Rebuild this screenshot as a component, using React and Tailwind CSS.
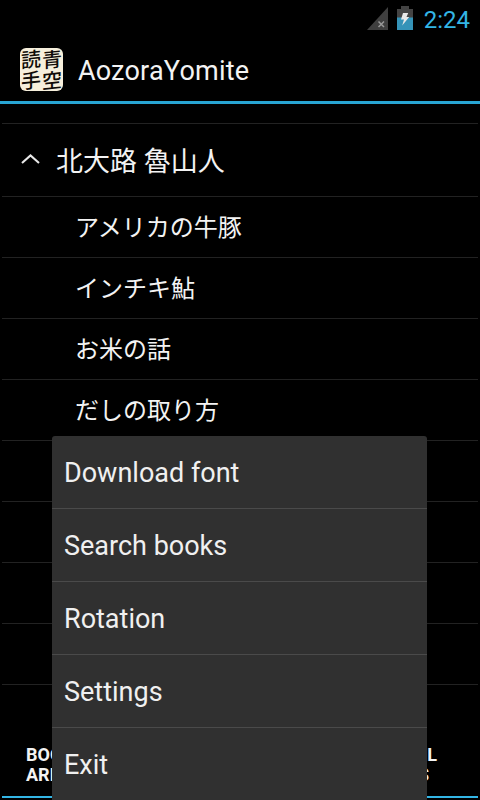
const stories = ["アメリカの牛豚", "インチキ鮎", "お米の話", "だしの取り方", "", "", "", ""];

const menuItems = ["Download font", "Search books", "Rotation", "Settings", "Exit"];

function StatusBar() {
  return (
    <div className="flex h-[38px] shrink-0 items-start justify-end pr-[10px]">
      <svg className="mt-[7px] mr-[9px]" width="21" height="23" viewBox="0 0 21 23">
        <path d="M0 23L21 0V23Z" fill="#3f3f3f" />
        <path d="M11.5 14.5L17 20M17 14.5L11.5 20" stroke="#999" strokeWidth="1.5" />
      </svg>
      <svg className="mt-[6px] mr-[11px]" width="16" height="24" viewBox="0 0 16 24">
        <path d="M4 0H12V3H16V12H0V3H4Z" fill="#444" />
        <path d="M0 11.5H16V24H0Z" fill="#3593b8" />
        <path d="M6 7H11.2L9.5 11H12.2L5.2 19.5L7 13.5H4Z" fill="#e8e8e8" />
      </svg>
      <span className="mt-[5px] text-[24px] leading-[30px] text-[#33b5e5]">2:24</span>
    </div>
  );
}

function AppIcon() {
  return (
    <div className="grid size-[43px] grid-cols-2 place-items-center rounded-[6px] bg-[#f6efdc] py-px font-['Noto_Sans_CJK_JP',sans-serif] text-[20px] leading-[20px] font-medium text-[#100c08]">
      <span className="-skew-y-6">読</span>
      <span className="-skew-y-6">青</span>
      <span className="-skew-y-6">手</span>
      <span className="-skew-y-6">空</span>
    </div>
  );
}

function Header() {
  return (
    <header className="flex h-[66px] shrink-0 items-center border-b-[3px] border-[#28a5d3] pl-[20px]">
      <AppIcon />
      <h1 className="mt-[2px] ml-[15px] text-[27px] leading-[32px] tracking-[0.22px] text-[#f3f3f3]">AozoraYomite</h1>
    </header>
  );
}

function BookList() {
  return (
    <main className="mx-[2px] h-[631px] shrink-0 pt-[19px] font-['Roboto','Noto_Sans_CJK_JP',sans-serif] text-[#f3f3f3]">
      <div className="flex h-[74px] items-center border-y border-[#222] pl-[19px]">
        <svg className="mb-[2px]" width="19" height="10" viewBox="0 0 19 10" fill="none">
          <path d="M1 9L9.5 1.5L18 9" stroke="#e8e8e8" strokeWidth="2.1" />
        </svg>
        <span className="mt-[3px] ml-[16px] text-[27px] leading-[40px]">北大路 魯山人</span>
      </div>
      {stories.map((title, i) => (
        <div key={i} className="flex h-[61px] items-center border-b border-[#222] pt-[2px] pl-[73px] text-[24px] leading-[36px]">
          {title}
        </div>
      ))}
    </main>
  );
}

function BottomTabs() {
  return (
    <nav className="mx-[2px] flex h-[63px] shrink-0 justify-between border-b-2 border-[#33b5e5] pt-[10px] pr-[41px] pl-[24px] text-[18px] leading-[20px] font-bold text-[#f3f3f3]">
      <div>
        BOO
        <br />
        ARR
      </div>
      <div className="text-right">
        <div>L</div>
        <div className="pr-[8px]">S</div>
      </div>
    </nav>
  );
}

function OptionsMenu() {
  return (
    <ul className="absolute top-[436px] left-[52px] w-[375px] rounded-t-[3px] bg-[#303030] text-[27px] text-[#f0f0f0]">
      {menuItems.map((item) => (
        <li key={item} className="flex h-[73px] items-center border-b border-[#4a4a4a] pt-[2px] pl-[12px] last:border-b-0">
          {item}
        </li>
      ))}
    </ul>
  );
}

export default function App() {
  return (
    <div className="relative flex h-[800px] w-[480px] flex-col overflow-hidden bg-black font-['Roboto',sans-serif]">
      <StatusBar />
      <Header />
      <BookList />
      <BottomTabs />
      <OptionsMenu />
    </div>
  );
}
